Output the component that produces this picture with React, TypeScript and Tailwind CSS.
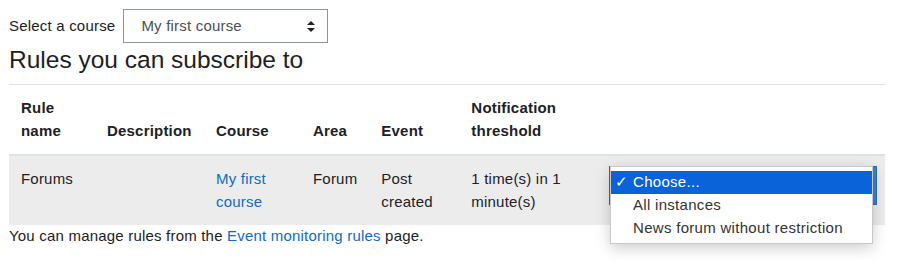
const font = { fontFamily: '"Liberation Sans", Arial, sans-serif' };

const App = () => {
  return (
    <div className="relative w-[898px] h-[261px] bg-white text-[15px] leading-[22.5px] tracking-[0.2px] text-[#1d2125] pl-[9px] pr-[13px]" style={font}>
      <div className="flex items-center gap-[8px] pt-[9px]">
        <label>Select a course</label>
        <div className="flex items-center justify-between w-[205px] h-[34px] border border-[#8f959e] pl-[17px] pr-[12px] text-[#495057]">
          <span>My first course</span>
          <svg width="8" height="11" viewBox="0 0 8 11">
            <path d="M4 0 L8 4 L0 4 Z M4 11 L0 7 L8 7 Z" fill="#1d2125" />
          </svg>
        </div>
      </div>
      <h3 className="text-[24.5px] leading-[28px] tracking-normal mt-[3px] mb-[10px]">Rules you can subscribe to</h3>
      <table className="w-[876px] border-collapse text-left">
        <thead>
          <tr className="border-t border-[#dee2e6] border-b-2">
            <th className="font-bold px-[12px] py-[12px] w-[86px] align-bottom">Rule<br />name</th>
            <th className="font-bold px-[12px] py-[12px] w-[109px] align-bottom">Description</th>
            <th className="font-bold px-[12px] py-[12px] w-[97px] align-bottom">Course</th>
            <th className="font-bold px-[12px] py-[12px] w-[68px] align-bottom">Area</th>
            <th className="font-bold px-[12px] py-[12px] w-[90px] align-bottom">Event</th>
            <th className="font-bold px-[12px] py-[12px] w-[138px] align-bottom">Notification<br />threshold</th>
            <th className="px-[12px] py-[12px] align-bottom"></th>
          </tr>
        </thead>
        <tbody>
          <tr className="bg-[#ececec]">
            <td className="px-[12px] py-[12px] align-top">Forums</td>
            <td className="px-[12px] py-[12px] align-top"></td>
            <td className="px-[12px] py-[12px] align-top">
              <a className="text-[#0f6cbf]">My first<br />course</a>
            </td>
            <td className="px-[12px] py-[12px] align-top">Forum</td>
            <td className="px-[12px] py-[12px] align-top">Post<br />created</td>
            <td className="px-[12px] py-[12px] align-top">1 time(s) in 1<br />minute(s)</td>
            <td className="px-[12px] py-[12px] align-top"></td>
          </tr>
        </tbody>
      </table>
      <p>
        You can manage rules from the <a className="text-[#0f6cbf]">Event monitoring rules</a> page.
      </p>

      {/* open select popup */}
      <div className="absolute left-[609px] top-[166px] w-[268px] h-[39px] bg-[#3f7fd1] border border-[#2f6db9]"></div>
      <div className="absolute left-[610px] top-[166px] w-[263px] bg-white border border-[#c8c8c8] shadow-[0_4px_14px_rgba(0,0,0,0.2)] pt-[4px] pb-[3px] text-[#333] tracking-[0.3px]">
        <div className="flex items-center h-[23px] bg-[#0a63d9] text-white pl-[4px]">
          <span className="w-[18px]">✓</span>
          <span>Choose...</span>
        </div>
        <div className="h-[23px] pl-[22px] flex items-center">All instances</div>
        <div className="h-[23px] pl-[22px] flex items-center">News forum without restriction</div>
      </div>
    </div>
  );
};

export default App;
